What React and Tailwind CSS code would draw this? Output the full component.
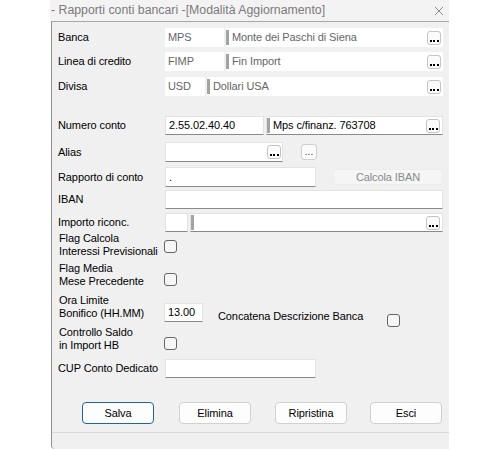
const FONT = "font-['Liberation_Sans',Arial,sans-serif] text-[11px] tracking-[-0.1px]"
const LABEL = `${FONT} text-black whitespace-nowrap`

function Dots() {
  return (
    <span className="flex items-end gap-[1.5px] pb-[2px]">
      <span className="w-[2px] h-[2px] bg-black" />
      <span className="w-[2px] h-[2px] bg-black" />
      <span className="w-[2px] h-[2px] bg-black" />
    </span>
  )
}

function EllBtn() {
  return (
    <span className="w-[14px] h-[14px] rounded-[3px] border border-[#c4c4c4] bg-[#fbfbfb] flex justify-center items-end shrink-0">
      <Dots />
    </span>
  )
}

function Field({ w, children, className = '', disabled }) {
  return (
    <div
      className={`h-full bg-white flex items-center shrink-0 ${disabled ? '' : 'border border-[#e3e3e3] border-b-[#8a8a8a]'} ${className}`}
      style={w ? { width: w } : undefined}
    >
      {children}
    </div>
  )
}

function Bar() {
  return <span className="w-[3px] h-[15px] bg-[#a3a3a3] shrink-0" />
}

function Text({ children, gray }) {
  return (
    <span className={`${FONT} ${gray ? 'text-[#666]' : 'text-black'} pl-[3px] whitespace-nowrap leading-[13px] block`}>
      {children}
    </span>
  )
}

function LookupRow({ label, code, codeW, desc, mt, disabled }) {
  return (
    <div className="flex items-center h-[19px]" style={{ marginTop: mt }}>
      <span className={`${LABEL} w-[107px] shrink-0`}>{label}</span>
      <Field w={codeW} disabled={disabled}>
        <Text gray={disabled}>{code}</Text>
      </Field>
      <Field className="flex-1 ml-[2px] pr-[2px]" disabled={disabled}>
        <Bar />
        <span className="flex-1"><Text gray={disabled}>{desc}</Text></span>
        <EllBtn />
      </Field>
    </div>
  )
}

function Check() {
  return <span className="w-[13px] h-[13px] rounded-[3px] border border-[#666] bg-[#f6f6f6] shrink-0 block" />
}

function TwoLine({ a, b }) {
  return (
    <span className={`${LABEL} w-[106px] shrink-0 leading-[13px] pl-[1px]`}>
      {a}<br />{b}
    </span>
  )
}

function Btn({ children, primary, ml }) {
  return (
    <button
      className={`w-[72px] h-[22px] rounded-[4px] bg-[#fdfdfd] ${LABEL} ${primary ? 'border border-[#1f63a8]' : 'border border-[#d0d0d0]'}`}
      style={{ marginLeft: ml }}
    >
      {children}
    </button>
  )
}

export default function App() {
  return (
    <div className="w-[500px] h-[449px] bg-white overflow-hidden">
      <div className="ml-[50px] w-[399px] h-full flex flex-col">
        {/* Title bar */}
        <div className="h-[21px] bg-[#f3f3f3] flex items-center justify-between pl-[1px] pr-[5px]">
          <span className="font-['Liberation_Sans',sans-serif] text-[12.3px] text-[#7b7b7b] whitespace-nowrap">
            - Rapporti conti bancari -[Modalità Aggiornamento]
          </span>
          <svg width="10" height="10" viewBox="0 0 10 10" className="mt-[1px]">
            <path d="M1 1L9 9M9 1L1 9" stroke="#8a8a8a" strokeWidth="1" />
          </svg>
        </div>

        {/* Body */}
        <div className="flex-1 ml-[1px] bg-[#f0f0f0] border-l border-[#8f8f8f] border-t border-t-[#a8a8a8] flex flex-col rounded-bl-[4px]">
          <div className="pl-[6px] pr-[6px] flex flex-col">
            <LookupRow label="Banca" code="MPS" codeW={59} desc="Monte dei Paschi di Siena" mt={6} disabled />
            <LookupRow label="Linea di credito" code="FIMP" codeW={59} desc="Fin Import" mt={5} disabled />
            <LookupRow label="Divisa" code="USD" codeW={40} desc="Dollari USA" mt={6} disabled />
            <LookupRow label="Numero conto" code="2.55.02.40.40" codeW={99} desc="Mps c/finanz. 763708" mt={20} />

            {/* Alias */}
            <div className="flex items-center h-[20px] mt-[7px]">
              <span className={`${LABEL} w-[107px] shrink-0`}>Alias</span>
              <Field w={118} className="justify-end pr-[1px]">
                <EllBtn />
              </Field>
              <span className="ml-[18px] w-[16px] h-[16px] rounded-[3px] border border-[#cfcfcf] bg-[#fbfbfb] flex justify-center items-end pb-[2px] text-[10px] leading-none text-[#444] font-['Liberation_Sans',sans-serif]">
                ...
              </span>
            </div>

            {/* Rapporto di conto */}
            <div className="flex items-center h-[20px] mt-[5px]">
              <span className={`${LABEL} w-[107px] shrink-0`}>Rapporto di conto</span>
              <Field w={151}>
                <Text>.</Text>
              </Field>
              <span className={`ml-[17px] w-[110px] h-[16px] rounded-[3px] bg-[#f5f5f5] border border-[#ececec] flex items-center justify-center ${FONT} text-[#8a8a8a] leading-none`}>
                Calcola IBAN
              </span>
            </div>

            {/* IBAN */}
            <div className="flex items-center h-[19px] mt-[3px]">
              <span className={`${LABEL} w-[107px] shrink-0`}>IBAN</span>
              <Field className="flex-1" />
            </div>

            {/* Importo riconc. */}
            <div className="flex items-center h-[19px] mt-[4px]">
              <span className={`${LABEL} w-[107px] shrink-0`}>Importo riconc.</span>
              <Field w={23} />
              <Field className="flex-1 ml-[2px] pr-[2px]">
                <Bar />
                <span className="flex-1" />
                <EllBtn />
              </Field>
            </div>

            {/* Flag Calcola */}
            <div className="flex items-start h-[26px]">
              <TwoLine a="Flag Calcola" b="Interessi Previsionali" />
              <span className="mt-[8px]"><Check /></span>
            </div>

            {/* Flag Media */}
            <div className="flex items-start h-[26px] mt-[4px]">
              <TwoLine a="Flag Media" b="Mese Precedente" />
              <span className="mt-[11px]"><Check /></span>
            </div>

            {/* Ora Limite */}
            <div className="flex items-start h-[28px] mt-[6px]">
              <TwoLine a="Ora Limite" b="Bonifico (HH.MM)" />
              <div className="mt-[9px] h-[19px] flex">
                <Field w={39}>
                  <Text>13.00</Text>
                </Field>
              </div>
              <span className={`${LABEL} ml-[15px] mt-[17px] leading-none w-[169px]`}>Concatena Descrizione Banca</span>
              <span className="mt-[20px]"><Check /></span>
            </div>

            {/* Controllo Saldo */}
            <div className="flex items-start h-[26px] mt-[4px]">
              <TwoLine a="Controllo Saldo" b="in Import HB" />
              <span className="mt-[11px]"><Check /></span>
            </div>

            {/* CUP */}
            <div className="flex items-center h-[19px] mt-[7px]">
              <span className={`${LABEL} w-[107px] shrink-0`}>CUP Conto Dedicato</span>
              <Field w={151} />
            </div>

            {/* Buttons */}
            <div className="flex h-[22px] mt-[24px] ml-[24px]">
              <Btn primary>Salva</Btn>
              <Btn ml={25}>Elimina</Btn>
              <Btn ml={24}>Ripristina</Btn>
              <Btn ml={23}>Esci</Btn>
            </div>
          </div>

          {/* Status bar */}
          <div className="mt-[8px] flex-1 border-t border-[#d9d9d9]" />
        </div>
      </div>
    </div>
  )
}
